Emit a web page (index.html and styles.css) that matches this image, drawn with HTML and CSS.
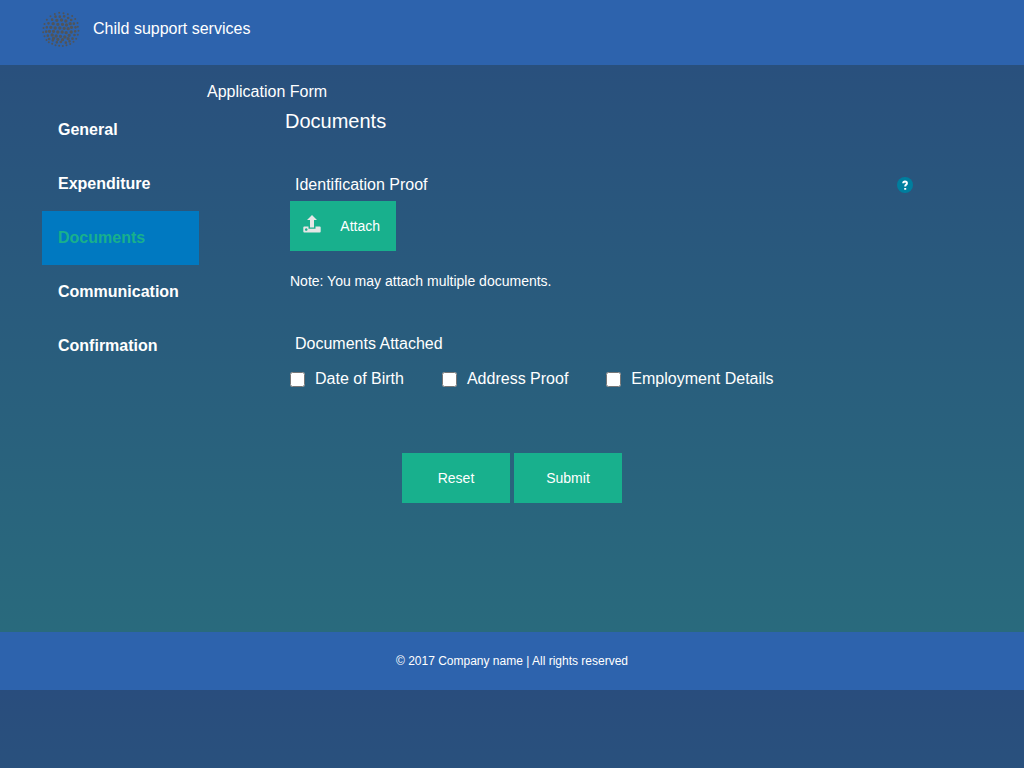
FILE: index.html
```html
<!DOCTYPE html>
<html lang="en">
<head>
<meta charset="utf-8">
<meta name="viewport" content="width=device-width, initial-scale=1">
<title>Child support services</title>
<link rel="stylesheet" href="styles.css">
</head>
<body>
<header class="header">
  <svg class="logo" viewBox="36 33 111 108" aria-hidden="true">
    <path class="dots-small" d="M86 38h0M99 40h0M112 43h0M73 42h0M60 49h0M125 48h0M49 59h0M42 72h0M39 84h0M38 97h0M42 109h0M48 120h0M55 127h0M65 131h0M75 136h0M86 137h0M97 138h0M108 136h0M119 132h0M129 125h0M137 116h0M142 104h0M144 92h0M142 80h0M141 69h0M134 57h0"/>
    <path class="dots-mid" d="M75 50h0M88 50h0M101 49h0M113 54h0M65 59h0M122 60h0M54 70h0M130 71h0M49 82h0M135 82h0M47 95h0M134 94h0M52 107h0M132 105h0M56 117h0M126 116h0M67 121h0M117 124h0M79 127h0M106 128h0M91 126h0"/>
    <path class="dots-large" d="M79 61h0M93 60h0M106 63h0M68 71h0M82 73h0M96 73h0M108 75h0M119 71h0M61 82h0M74 84h0M88 84h0M101 85h0M113 86h0M123 82h0M57 94h0M69 94h0M82 96h0M95 96h0M107 98h0M122 96h0M65 105h0M77 108h0M90 109h0M103 111h0M116 106h0M69 115h0M82 118h0M96 119h0M113 116h0"/>
  </svg>
  <span class="brand">Child support services</span>
</header>
<main class="page">
  <h1 class="page-title">Application Form</h1>
  <div class="columns">
    <nav class="menu" aria-label="Form sections">
      <a class="menu-item" href="#general">General</a>
      <a class="menu-item" href="#expenditure">Expenditure</a>
      <a class="menu-item active" href="#documents" aria-current="page">Documents</a>
      <a class="menu-item" href="#communication">Communication</a>
      <a class="menu-item" href="#confirmation">Confirmation</a>
    </nav>
    <form class="form" id="documents">
      <h2 class="form-title">Documents</h2>
      <div class="fields">
        <div class="field-head">
          <h3 class="label">Identification Proof</h3>
          <button class="help" type="button" aria-label="Help">
            <svg viewBox="0 0 16 16" aria-hidden="true"><circle class="help-disc" cx="8" cy="8" r="8"/><path class="help-mark" d="M6.200 6.300Q6.300 4.600 8 4.600Q9.900 4.600 9.900 6.200Q9.900 7.200 8.900 7.800Q8.200 8.200 8.200 9.600M8.200 10.900v1.900"/></svg>
          </button>
        </div>
        <button class="button attach" type="button">
          <svg class="attach-icon" viewBox="0 0 18 18" aria-hidden="true"><path fill-rule="evenodd" d="M9 0l5 5h-3V12.500H7V5H4zM1.300 11.500H5.500V13.800H12.500V11.500H16.700q1 0 1 1v3.900q0 1-1 1H1.300q-1 0-1-1v-3.900q0-1 1-1zM3.200 13.200a1.300 1.300 0 1 0 .1 0z"/></svg>
          <span>Attach</span>
        </button>
        <p class="note">Note: You may attach multiple documents.</p>
        <h3 class="label">Documents Attached</h3>
        <div class="checks">
          <label class="check"><input class="box" type="checkbox">Date of Birth</label>
          <label class="check"><input class="box" type="checkbox">Address Proof</label>
          <label class="check"><input class="box" type="checkbox">Employment Details</label>
        </div>
      </div>
    </form>
  </div>
  <div class="actions">
    <button class="button" type="reset" form="documents">Reset</button>
    <button class="button" type="submit" form="documents">Submit</button>
  </div>
</main>
<footer class="footer">© 2017 Company name | All rights reserved</footer>
</body>
</html>
```
FILE: styles.css
```css
* { box-sizing: border-box; }
body {
  margin: 0;
  color: #fff;
  font: 16px/24px "Liberation Sans", Arial, sans-serif;
  background: linear-gradient(#294d7d, #296d7d);
}
h1, h2, h3, p { margin: 0; font-weight: 400; }
.header {
  display: flex;
  align-items: center;
  gap: 13px;
  padding: 11px 42px 18px;
  background: #2d63ad;
}
.logo { width: 38px; height: 36px; }
.logo path { fill: none; stroke: #505459; stroke-linecap: round; }
.logo .dots-small { stroke-width: 6; }
.logo .dots-mid { stroke-width: 8; }
.logo .dots-large { stroke-width: 10; }
.page { padding: 15px 42px 129px; }
.page-title { padding-left: 165px; font-size: 16px; line-height: 23px; }
.columns { display: flex; gap: 86px; }
.menu { width: 157px; flex: none; }
.menu-item {
  display: block;
  padding: 15px 16px;
  color: #fff;
  font-weight: 700;
  text-decoration: none;
}
.menu-item.active { background: #0079c1; color: #18b08d; }
.form { flex: 1; padding-top: 4px; }
.form-title { font-size: 20px; line-height: 28px; }
.fields { padding: 38px 69px 0 5px; }
.field-head { display: flex; align-items: center; justify-content: space-between; }
.label { padding-left: 5px; font-size: 16px; }
.help { width: 16px; height: 16px; padding: 0; border: 0; background: none; }
.help svg { display: block; }
.help-disc { fill: #007e9e; }
.help-mark { fill: none; stroke: #fff; stroke-width: 2; }
.button {
  width: 108px;
  height: 50px;
  padding: 0;
  border: 0;
  background: #18b08d;
  color: #fff;
  font: 14px/20px "Liberation Sans", Arial, sans-serif;
}
.attach {
  display: flex;
  align-items: center;
  justify-content: space-between;
  width: 106px;
  margin-top: 4px;
  padding: 0 16px 0 13px;
}
.attach-icon { width: 18px; height: 18px; margin-bottom: 4px; fill: #e6e6e6; }
.note { padding: 20px 0 41px; font-size: 14px; line-height: 20px; }
.checks { display: flex; flex-wrap: wrap; gap: 38px; padding-top: 11px; }
.check { display: flex; align-items: center; gap: 10px; }
.box { width: 15px; height: 15px; margin: 0; }
.actions { display: flex; justify-content: center; gap: 4px; padding-top: 62px; }
.footer {
  padding: 17px 16px;
  background: #2d63ad;
  font-size: 12px;
  text-align: center;
}
```
